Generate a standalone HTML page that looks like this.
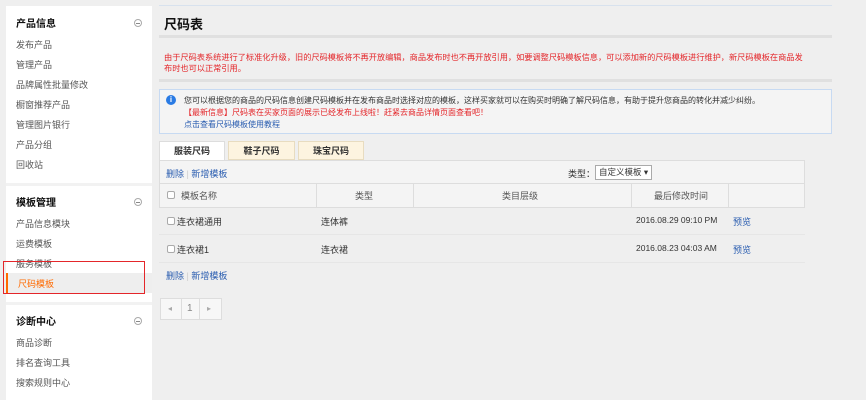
<!DOCTYPE html>
<html><head><meta charset="utf-8"><style>
*{margin:0;padding:0;box-sizing:border-box}
body{width:866px;height:400px;background:#efefef;font-family:"Liberation Sans","Noto Sans CJK SC",sans-serif;font-size:9px;color:#333;position:relative;overflow:hidden}
.a{position:absolute;white-space:nowrap}
.side{left:6px;top:6px;width:146px;height:394px;background:#fff}
.gap{left:6px;width:146px;height:3px;background:#f2f2f2}
.t{left:16px;font-size:10px;font-weight:bold;color:#111}
.i{left:16px;color:#555;font-size:9px}
.m{left:134px;width:8px;height:8px;border:1px solid #aaa;border-radius:50%}
.m:after{content:"";position:absolute;left:1px;top:2.5px;width:4px;height:1px;background:#888}
.blue{color:#2a5db0}
.red{color:#e4262a}
.cb{width:8px;height:8px;border:1px solid #aaa;border-radius:2px;background:#fff}
.v{top:184px;width:1px;height:24px;background:#ddd}
</style></head><body>
<div class="a side"></div>
<div class="a gap" style="top:183px"></div>
<div class="a gap" style="top:302px"></div>
<div class="a t" style="top:15px">产品信息</div><div class="a m" style="top:19px"></div>
<div class="a i" style="top:38px">发布产品</div>
<div class="a i" style="top:58px">管理产品</div>
<div class="a i" style="top:78px">品牌属性批量修改</div>
<div class="a i" style="top:98px">橱窗推荐产品</div>
<div class="a i" style="top:118px">管理图片银行</div>
<div class="a i" style="top:138px">产品分组</div>
<div class="a i" style="top:158px">回收站</div>
<div class="a t" style="top:194px">模板管理</div><div class="a m" style="top:198px"></div>
<div class="a i" style="top:217px">产品信息模块</div>
<div class="a i" style="top:237px">运费模板</div>
<div class="a i" style="top:257px">服务模板</div>
<div class="a" style="left:6px;top:273px;width:146px;height:20px;background:#eee"></div>
<div class="a" style="left:6px;top:273px;width:2px;height:20px;background:#ff6a00"></div>
<div class="a i" style="top:277px;left:18px;color:#ff6a00">尺码模板</div>
<div class="a" style="left:3px;top:261px;width:142px;height:33px;border:1.5px solid #e4262a"></div>
<div class="a t" style="top:313px">诊断中心</div><div class="a m" style="top:317px"></div>
<div class="a i" style="top:336px">商品诊断</div>
<div class="a i" style="top:356px">排名查询工具</div>
<div class="a i" style="top:376px">搜索规则中心</div>

<div class="a" style="left:159px;top:5px;width:673px;height:1px;background:#d8e2ee"></div>
<div class="a" style="left:164px;top:14px;font-size:13px;font-weight:bold;color:#111">尺码表</div>
<div class="a" style="left:159px;top:35px;width:673px;height:3px;background:#e0e0e0"></div>
<div class="a red" style="left:164px;top:52px;width:664px;white-space:normal;font-size:8.2px;line-height:11px">由于尺码表系统进行了标准化升级，旧的尺码模板将不再开放编辑，商品发布时也不再开放引用，如要调整尺码模板信息，可以添加新的尺码模板进行维护，新尺码模板在商品发<br>布时也可以正常引用。</div>
<div class="a" style="left:159px;top:79px;width:673px;height:3px;background:#e0e0e0"></div>
<div class="a" style="left:159px;top:89px;width:673px;height:45px;border:1px solid #c7daf2;background:#f4f4f4"></div>
<div class="a" style="left:166px;top:95px;width:10px;height:10px;border-radius:50%;background:#2a7be4;color:#fff;font-size:8px;font-weight:bold;text-align:center;line-height:10px">i</div>
<div class="a" style="left:184px;top:95px;font-size:8px;color:#333">您可以根据您的商品的尺码信息创建尺码模板并在发布商品时选择对应的模板，这样买家就可以在购买时明确了解尺码信息，有助于提升您商品的转化并减少纠纷。</div>
<div class="a red" style="left:184px;top:107px;font-size:8px">【最新信息】尺码表在买家页面的展示已经发布上线啦！赶紧去商品详情页面查看吧！</div>
<div class="a blue" style="left:184px;top:119px;font-size:8px">点击查看尺码模板使用教程</div>

<div class="a" style="left:159px;top:141px;width:66px;height:20px;background:#fff;border:1px solid #ddd;border-bottom:none;text-align:center;line-height:19px;font-weight:bold">服装尺码</div>
<div class="a" style="left:228px;top:141px;width:67px;height:19px;background:#fdf4e0;border:1px solid #e8dcc0;text-align:center;line-height:18px;font-weight:bold">鞋子尺码</div>
<div class="a" style="left:298px;top:141px;width:66px;height:19px;background:#fdf4e0;border:1px solid #e8dcc0;text-align:center;line-height:18px;font-weight:bold">珠宝尺码</div>
<div class="a" style="left:159px;top:160px;width:646px;height:48px;background:#f4f4f4;border:1px solid #ddd"></div>
<div class="a" style="left:160px;top:183px;width:644px;height:1px;background:#ddd"></div>
<div class="a blue" style="left:166px;top:167px">删除 <span style="color:#ccc">|</span> 新增模板</div>
<div class="a" style="left:568px;top:167px">类型：</div>
<div class="a" style="left:595px;top:165px;width:57px;height:15px;background:#fff;border:1px solid #aaa;padding-left:3px;line-height:13px;font-size:8.5px">自定义模板 ▾</div>
<div class="a v" style="left:316px"></div>
<div class="a v" style="left:413px"></div>
<div class="a v" style="left:631px"></div>
<div class="a v" style="left:728px"></div>
<div class="a cb" style="left:167px;top:191px"></div>
<div class="a" style="left:181px;top:189px;color:#555">模板名称</div>
<div class="a" style="left:355px;top:189px;color:#555">类型</div>
<div class="a" style="left:502px;top:189px;color:#555">类目层级</div>
<div class="a" style="left:654px;top:189px;color:#555">最后修改时间</div>
<div class="a" style="left:159px;top:234px;width:646px;height:1px;background:#e6e6e6"></div>
<div class="a" style="left:159px;top:262px;width:646px;height:1px;background:#e6e6e6"></div>
<div class="a cb" style="left:167px;top:217px"></div>
<div class="a" style="left:177px;top:215px">连衣裙通用</div>
<div class="a" style="left:321px;top:215px">连体裤</div>
<div class="a" style="left:636px;top:215px;font-size:8.5px">2016.08.29 09:10 PM</div>
<div class="a blue" style="left:733px;top:215px">预览</div>
<div class="a cb" style="left:167px;top:245px"></div>
<div class="a" style="left:177px;top:243px">连衣裙1</div>
<div class="a" style="left:321px;top:243px">连衣裙</div>
<div class="a" style="left:636px;top:243px;font-size:8.5px">2016.08.23 04:03 AM</div>
<div class="a blue" style="left:733px;top:243px">预览</div>
<div class="a blue" style="left:166px;top:269px">删除 <span style="color:#ccc">|</span> 新增模板</div>
<div class="a" style="left:160px;top:298px;width:62px;height:22px;background:#f7f7f7;border:1px solid #ddd"></div>
<div class="a" style="left:199px;top:298px;width:1px;height:22px;background:#ddd"></div>
<div class="a" style="left:181px;top:298px;width:1px;height:22px;background:#ddd"></div>
<div class="a" style="left:168px;top:304px;color:#aaa;font-size:8px">◂</div>
<div class="a" style="left:187px;top:303px;color:#888;font-size:10px">1</div>
<div class="a" style="left:207px;top:304px;color:#aaa;font-size:8px">▸</div>
</body></html>
